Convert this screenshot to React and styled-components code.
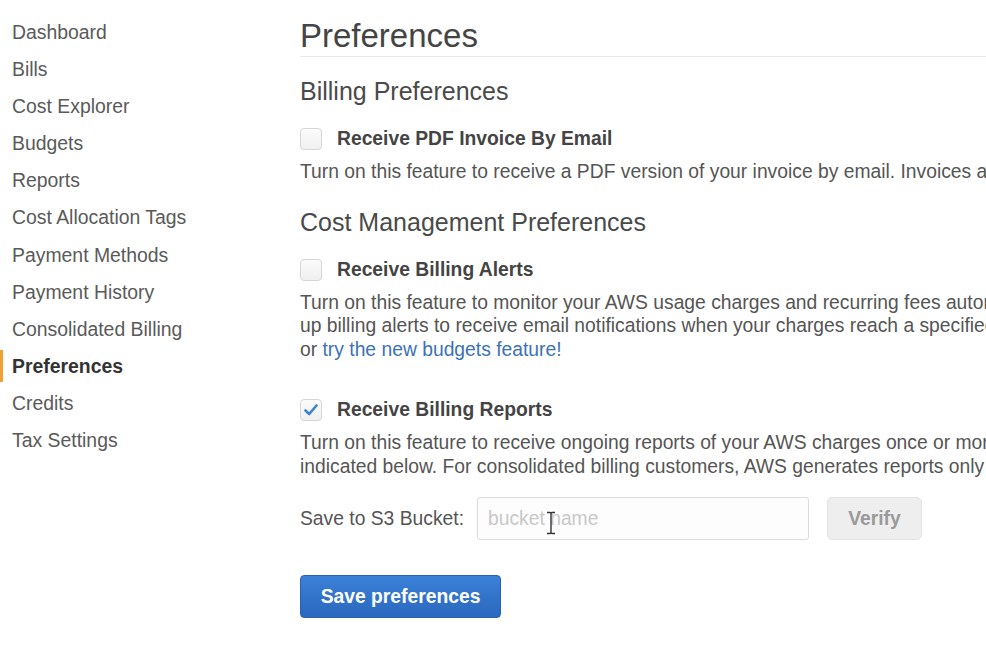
import React from 'react';
import styled, { createGlobalStyle } from 'styled-components';

const GlobalStyle = createGlobalStyle`
    html, body {
        margin : 0;
        padding : 0;
        background : #fff;
        font-family : "Liberation Sans", Arial, sans-serif;
        overflow : hidden;
    }
`;

const Page = styled.div`
    display : flex;
    width : 100%;
    height : 658px;
    background : #fff;
`;

const Sidebar = styled.nav`
    width : 300px;
    flex-shrink : 0;
    padding-top : 14px;
    display : flex;
    flex-direction : column;
`;

const NavItem = styled.a`
    position : relative;
    display : block;
    height : 37.1px;
    line-height : 37px;
    padding-left : 12px;
    font-size : 19.4px;
    color : ${(props)=>(props.active ? "#333" : "#5a5a5a")};
    font-weight : ${(props)=>(props.active ? "bold" : "normal")};
    text-decoration : none;
    white-space : nowrap;
    &::before {
        content : "";
        display : ${(props)=>(props.active ? "block" : "none")};
        position : absolute;
        left : 0;
        top : 2px;
        width : 3px;
        height : 32px;
        background : #eea236;
    }
`;

const Main = styled.main`
    flex : 1;
    min-width : 0;
    overflow : hidden;
    padding-top : 16px;
`;

const Title = styled.h1`
    margin : 0;
    font-size : 33px;
    font-weight : normal;
    line-height : 40px;
    color : #444;
    border-bottom : 1px solid #e9e9e9;
    white-space : nowrap;
`;

const SectionTitle = styled.h2`
    margin : ${(props)=>props.top}px 0 0;
    font-size : 25px;
    font-weight : normal;
    line-height : 30px;
    color : #4a4a4a;
    white-space : nowrap;
`;

const CheckRow = styled.label`
    display : flex;
    align-items : center;
    gap : 15px;
    height : 24px;
    margin-top : ${(props)=>props.top}px;
`;

const Box = styled.span`
    width : 22px;
    height : 22px;
    box-sizing : border-box;
    border : 1px solid #d6d6d6;
    border-radius : 4px;
    background : linear-gradient(#fbfbfb, #f0f0f0);
    display : flex;
    align-items : center;
    justify-content : center;
    flex-shrink : 0;
`;

const CheckLabel = styled.span`
    font-size : 19.3px;
    font-weight : bold;
    color : #444;
    white-space : nowrap;
`;

const Desc = styled.div`
    margin-top : 9px;
    font-size : 19.3px;
    line-height : 23.5px;
    color : #555;
    white-space : nowrap;
`;

const TextLink = styled.a`
    color : #3b72b8;
    text-decoration : none;
`;

const BucketRow = styled.div`
    display : flex;
    align-items : center;
    margin-top : 19px;
    height : 43px;
`;

const BucketLabel = styled.span`
    font-size : 19.3px;
    color : #555;
    width : 177px;
    white-space : nowrap;
`;

const InputWrap = styled.div`
    position : relative;
    width : 332px;
    height : 43px;
`;

const BucketInput = styled.input`
    width : 100%;
    height : 100%;
    box-sizing : border-box;
    border : 1px solid #dcdcdc;
    border-radius : 3px;
    padding : 0 10px;
    font-family : "Liberation Sans", Arial, sans-serif;
    font-size : 19.3px;
    color : #555;
    background : #fdfdfe;
    outline : none;
    &::placeholder {
        color : #c8c8c8;
    }
`;

const Cursor = styled.svg`
    position : absolute;
    left : 69px;
    top : 14px;
`;

const VerifyBtn = styled.button`
    margin-left : 18px;
    width : 95px;
    height : 43px;
    border : 1px solid #e3e3e3;
    border-radius : 5px;
    background : #eeeeee;
    color : #9a9a9a;
    font-family : "Liberation Sans", Arial, sans-serif;
    font-size : 19.3px;
    font-weight : bold;
`;

const SaveBtn = styled.button`
    margin-top : 35px;
    width : 201px;
    height : 43px;
    border : 1px solid #2b62ad;
    border-radius : 4px;
    background : linear-gradient(#3b80d8, #2a68bd);
    color : #fff;
    font-family : "Liberation Sans", Arial, sans-serif;
    font-size : 19.3px;
    font-weight : bold;
    cursor : pointer;
`;

const Checkmark = ()=>(
    <svg width="16" height="14" viewBox="0 0 16 14">
        <path d="M2.5 7.5 L6.2 11 L13.5 2.5" fill="none" stroke="#3a84d0" strokeWidth="2.6" strokeLinecap="round" strokeLinejoin="round" />
    </svg>
);

const navItems = [
    "Dashboard", "Bills", "Cost Explorer", "Budgets", "Reports", "Cost Allocation Tags",
    "Payment Methods", "Payment History", "Consolidated Billing", "Preferences", "Credits", "Tax Settings",
];

const App = ()=>{
    return(
        <Page>
            <GlobalStyle />
            <Sidebar>
                {navItems.map((item)=>(
                    <NavItem key={item} active={item === "Preferences" ? 1 : 0}>{item}</NavItem>
                ))}
            </Sidebar>
            <Main>
                <Title>Preferences</Title>

                <SectionTitle top={19}>Billing Preferences</SectionTitle>
                <CheckRow top={21}>
                    <Box />
                    <CheckLabel>Receive PDF Invoice By Email</CheckLabel>
                </CheckRow>
                <Desc>Turn on this feature to receive a PDF version of your invoice by email. Invoices are generally available within the first three days of the month.</Desc>

                <SectionTitle top={23}>Cost Management Preferences</SectionTitle>
                <CheckRow top={21}>
                    <Box />
                    <CheckLabel>Receive Billing Alerts</CheckLabel>
                </CheckRow>
                <Desc>
                    Turn on this feature to monitor your AWS usage charges and recurring fees automatically, making it easier to track and manage your spending on AWS. You can set<br />
                    up billing alerts to receive email notifications when your charges reach a specified threshold. Once enabled, this preference cannot be disabled. Manage Billing Alerts<br />
                    or <TextLink href="#">try the new budgets feature!</TextLink>
                </Desc>

                <CheckRow top={37}>
                    <Box><Checkmark /></Box>
                    <CheckLabel>Receive Billing Reports</CheckLabel>
                </CheckRow>
                <Desc>
                    Turn on this feature to receive ongoing reports of your AWS charges once or more daily. AWS delivers these reports to the Amazon S3 bucket that you specify<br />
                    indicated below. For consolidated billing customers, AWS generates reports only for paying accounts. Linked accounts cannot sign up for billing reports.
                </Desc>

                <BucketRow>
                    <BucketLabel>Save to S3 Bucket:</BucketLabel>
                    <InputWrap>
                        <BucketInput placeholder="bucket name" />
                        <Cursor width="10" height="24" viewBox="0 0 10 24">
                            <path d="M1 1.5 H4 Q5 1.5 5 3 V21 Q5 22.5 4 22.5 H1 M9 1.5 H6 Q5 1.5 5 3 M5 21 Q5 22.5 6 22.5 H9" fill="none" stroke="#333" strokeWidth="1.4" />
                        </Cursor>
                    </InputWrap>
                    <VerifyBtn>Verify</VerifyBtn>
                </BucketRow>

                <SaveBtn>Save preferences</SaveBtn>
            </Main>
        </Page>
    );
}

export default App;
